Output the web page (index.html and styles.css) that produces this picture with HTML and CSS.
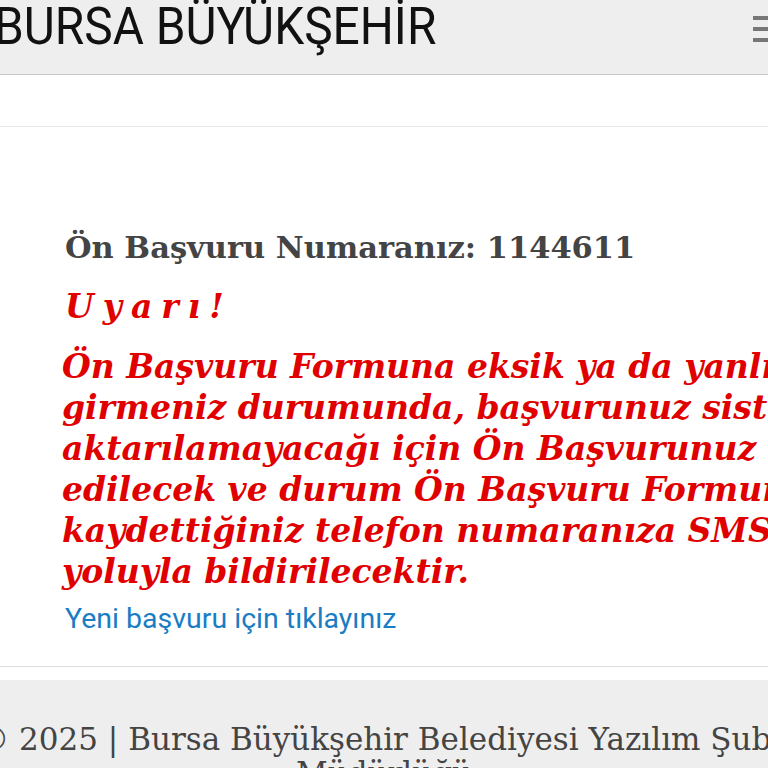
FILE: index.html
```html
<!DOCTYPE html>
<html lang="tr">
<head>
<meta charset="UTF-8">
<title>Ön Başvuru - Bursa Büyükşehir</title>
<link rel="stylesheet" href="styles.css">
</head>
<body>
<div class="navbar">
    <span class="brand">BURSA BÜYÜKŞEHİR</span>
    <span class="toggle"><i></i><i></i><i></i></span>
</div>
<div class="subbar"></div>
<div class="content">
    <h3 class="basvuru">Ön Başvuru Numaranız: 1144611</h3>
    <h3 class="uyari">Uyarı!</h3>
    <p class="uyari-text">Ön Başvuru Formuna eksik ya da yanlış bilgi<br>
    girmeniz durumunda, başvurunuz sisteme<br>
    aktarılamayacağı için Ön Başvurunuz iptal<br>
    edilecek ve durum Ön Başvuru Formuna<br>
    kaydettiğiniz telefon numaranıza SMS<br>
    yoluyla bildirilecektir.</p>
    <a href="#" class="yeni">Yeni başvuru için tıklayınız</a>
</div>
<div class="footer">
    <p>© 2025 | Bursa Büyükşehir Belediyesi Yazılım Şube Müdürlüğü</p>
</div>
</body>
</html>
```

FILE: styles.css
```css
html, body {
  margin: 0;
  overflow: hidden;
  background: white;
}

.navbar {
  height: 74px;
  background: #eeeeee;
  border-bottom: 1px solid #c8c8c8;
  display: flex;
  align-items: flex-start;
  justify-content: space-between;
  overflow: hidden;
}

.brand {
  font-family: Roboto, sans-serif;
  font-size: 52px;
  line-height: 1;
  color: #111;
  margin-top: 1px;
  margin-left: -6px;
  display: inline-block;
  transform: scaleX(0.92);
  transform-origin: left top;
  white-space: nowrap;
}

.toggle {
  display: flex;
  flex-direction: column;
  gap: 7px;
  margin-top: 16px;
  margin-right: -12px;
}
.toggle i {
  display: block;
  width: 27px;
  height: 4px;
  background: #777;
}

.subbar {
  height: 51px;
  border-bottom: 1px solid #e6e6e6;
}

.content {
  padding: 98px 0 31px 65px;
  border-bottom: 1px solid #dddddd;
  white-space: nowrap;
}

.basvuru {
  font-family: "DejaVu Serif", "Liberation Serif", serif;
  font-size: 30.5px;
  color: #444;
  margin: 0;
  line-height: 44px;
}

.uyari {
  font-family: "DejaVu Serif", "Liberation Serif", serif;
  font-style: italic;
  font-size: 33px;
  letter-spacing: 9px;
  color: #e00000;
  margin: 16px 0 0 0;
  line-height: 44px;
}

.uyari-text {
  font-family: "DejaVu Serif", "Liberation Serif", serif;
  font-style: italic;
  font-weight: bold;
  font-size: 33px;
  line-height: 41px;
  color: #e00000;
  margin: 17px 0 0 -3px;
}

.yeni {
  display: block;
  font-family: Roboto, sans-serif;
  font-size: 28.5px;
  color: #1a7dc4;
  text-decoration: none;
  margin-top: 10px;
}

.footer {
  margin-top: 13px;
  background: #eeeeee;
  padding-top: 42px;
  height: 120px;
}
.footer p {
  font-family: "DejaVu Serif", "Liberation Serif", serif;
  font-size: 31px;
  color: #444;
  margin: 0 -40px;
  text-align: center;
  line-height: 34px;
}
```
